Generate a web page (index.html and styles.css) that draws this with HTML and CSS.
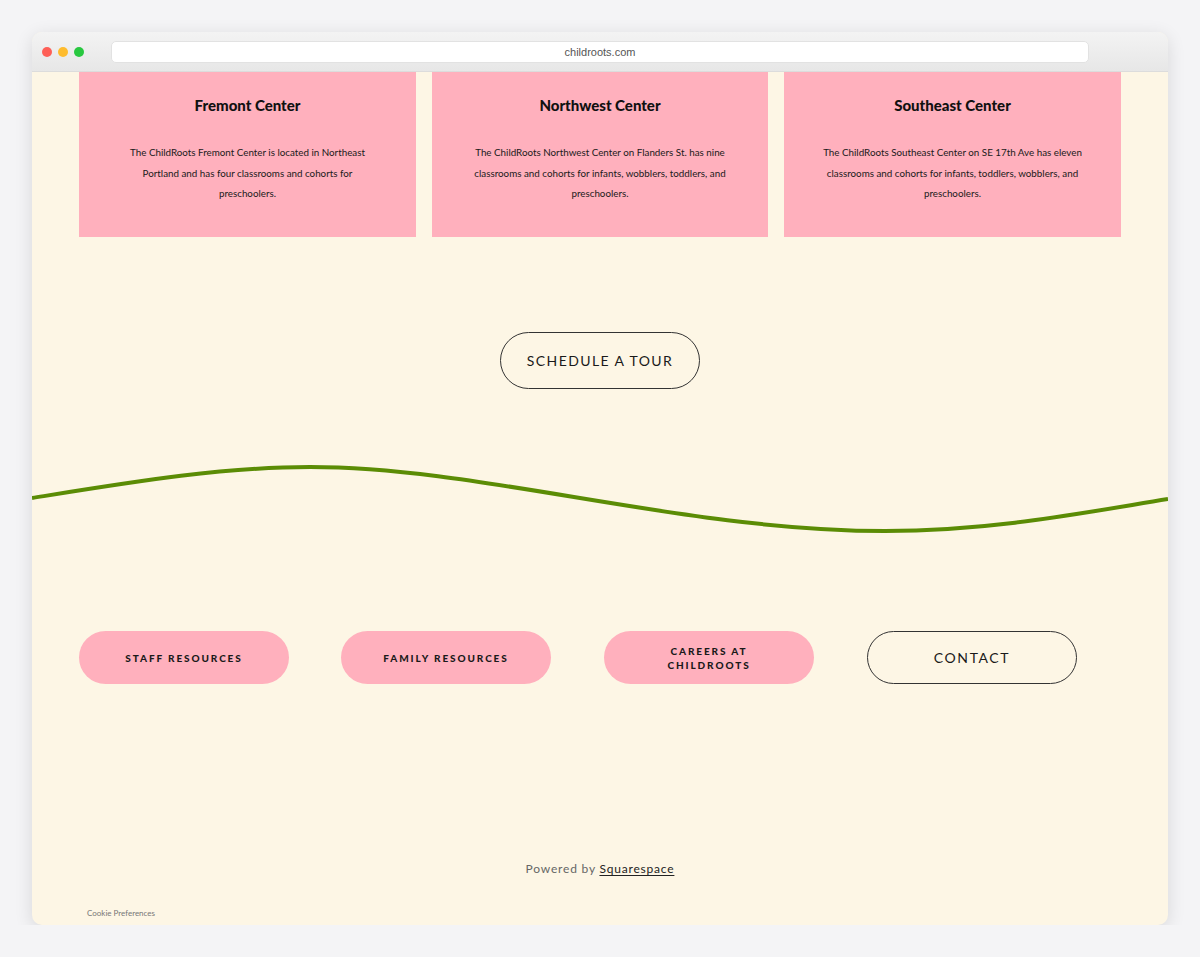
FILE: index.html
```html
<!DOCTYPE html>
<html>
<head>
<meta charset="utf-8">
<link rel="stylesheet" href="styles.css">
</head>
<body>
<div class="window">
  <div class="titlebar">
    <div class="dots"><span class="dot red"></span><span class="dot yellow"></span><span class="dot green"></span></div>
    <div class="url">childroots.com</div>
  </div>
  <div class="content">
    <div class="cards">
      <div class="card card-narrow">
        <h3>Fremont Center</h3>
        <p>The ChildRoots Fremont Center is located in Northeast Portland and has four classrooms and cohorts for preschoolers.</p>
      </div>
      <div class="card">
        <h3>Northwest Center</h3>
        <p>The ChildRoots Northwest Center on Flanders St. has nine classrooms and cohorts for infants, wobblers, toddlers, and preschoolers.</p>
      </div>
      <div class="card">
        <h3>Southeast Center</h3>
        <p>The ChildRoots Southeast Center on SE 17th Ave has eleven classrooms and cohorts for infants, toddlers, wobblers, and preschoolers.</p>
      </div>
    </div>
    <div class="tour-wrap"><a class="btn-outline tour">SCHEDULE A TOUR</a></div>
    <svg class="wave" viewBox="0 0 1136 120" preserveAspectRatio="none">
      <path d="M0 58 C 100 42, 190 27, 278 27 C 450 27, 650 91, 853 91 C 960 91, 1050 73, 1136 59" fill="none" stroke="#5b8c05" stroke-width="4"/>
    </svg>
    <div class="links">
      <a class="btn-pink">STAFF RESOURCES</a>
      <a class="btn-pink">FAMILY RESOURCES</a>
      <a class="btn-pink">CAREERS AT<br>CHILDROOTS</a>
      <a class="btn-outline contact">CONTACT</a>
    </div>
    <div class="powered">Powered by <a>Squarespace</a></div>
    <div class="cookie">Cookie Preferences</div>
  </div>
</div>
</body>
</html>
```
FILE: styles.css
```css
* { box-sizing: border-box; }
body {
  margin: 0;
  background: #f4f4f6;
  font-family: "Lato", "Liberation Sans", sans-serif;
}
.window {
  margin: 32px 0 0 32px;
  width: 1136px;
  height: 893px;
  border-radius: 10px;
  overflow: hidden;
  box-shadow: 0 4px 18px rgba(0,0,0,0.12);
  background: #fdf6e5;
}
.titlebar {
  height: 40px;
  background: linear-gradient(#f3f3f3, #e7e7e7);
  border-bottom: 1px solid #dcdcdc;
  display: flex;
  align-items: center;
}
.dots { display: flex; gap: 6px; padding-left: 10px; width: 79px; }
.dot { width: 10px; height: 10px; border-radius: 50%; display: block; }
.red { background: #fe5f57; }
.yellow { background: #febc2e; }
.green { background: #28c840; }
.url {
  width: 978px;
  height: 22px;
  background: #fff;
  border: 1px solid #e2e2e2;
  border-radius: 5px;
  font-family: "Liberation Sans", sans-serif;
  font-size: 11px;
  color: #555;
  display: flex;
  align-items: center;
  justify-content: center;
}
.content { height: 853px; position: relative; }
.cards {
  display: flex;
  gap: 16px;
  padding-left: 47px;
}
.card {
  width: 337px;
  height: 165px;
  background: #ffb0bd;
  text-align: center;
  padding: 24px 33px 0;
}
.card-narrow { padding-left: 43px; padding-right: 43px; }
.card:nth-child(2) { width: 336px; }
.card h3 {
  margin: 0;
  font-size: 15px;
  font-weight: 900;
  line-height: 18px;
  color: #111;
}
.card p {
  margin: 28px 0 0;
  font-size: 9.8px;
  line-height: 20.5px;
  color: #1a1a1a;
}
.tour-wrap { display: flex; justify-content: center; margin-top: 95px; }
.btn-outline {
  border: 1px solid #333;
  border-radius: 30px;
  display: flex;
  align-items: center;
  justify-content: center;
  color: #1a1a1a;
  font-size: 14px;
  letter-spacing: 1.4px;
}
.tour { width: 200px; height: 57px; }
.wave { display: block; width: 1136px; height: 120px; margin-top: 51px; }
.links {
  display: flex;
  gap: 52px;
  padding-left: 47px;
  margin-top: 71px;
}
.btn-pink, .contact {
  width: 210px;
  height: 53px;
  border-radius: 27px;
}
.btn-pink {
  background: #ffb0bd;
  display: flex;
  align-items: center;
  justify-content: center;
  text-align: center;
  font-size: 10px;
  font-weight: 900;
  letter-spacing: 1.9px;
  line-height: 14px;
  color: #1a1a1a;
}
.btn-pink:nth-child(3) { margin-left: 1px; }
.contact { font-size: 14px; letter-spacing: 1.6px; margin-left: 1px; }
.powered {
  margin-top: 177px;
  text-align: center;
  font-size: 12px;
  letter-spacing: 0.8px;
  color: #666;
}
.powered a { color: #222; text-decoration: underline; text-underline-offset: 2px; }
.cookie {
  position: absolute;
  left: 55px;
  bottom: 7px;
  font-size: 8px;
  color: #777;
}
```
